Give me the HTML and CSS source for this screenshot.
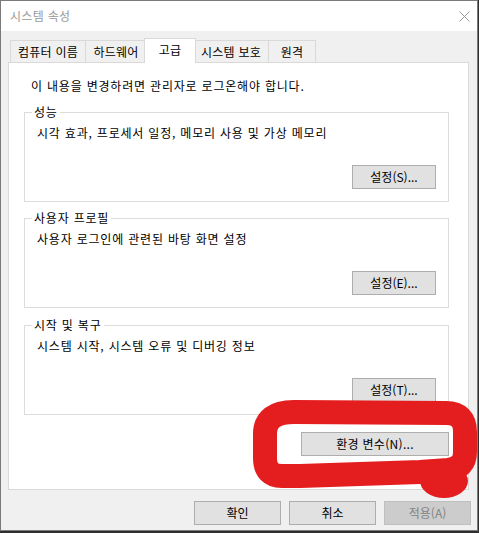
FILE: index.html
```html
<!DOCTYPE html>
<html lang="ko">
<head>
<meta charset="utf-8">
<title>시스템 속성</title>
<link rel="stylesheet" href="styles.css">
</head>
<body>
<div class="window">
  <div class="titlebar">
    <span class="title">시스템 속성</span>
    <span class="close">
      <svg width="11" height="11" viewBox="0 0 11 11"><path d="M0.5 0.5 L10.5 10.5 M10.5 0.5 L0.5 10.5" stroke="#9a9a9a" stroke-width="1" fill="none"/></svg>
    </span>
  </div>
  <div class="body">
    <div class="tabs">
      <div class="tab t-name">컴퓨터 이름</div>
      <div class="tab t-hw">하드웨어</div>
      <div class="tab active">고급</div>
      <div class="tab t-prot">시스템 보호</div>
      <div class="tab t-remote">원격</div>
    </div>
    <div class="panel">
      <p class="note">이 내용을 변경하려면 관리자로 로그온해야 합니다.</p>
      <div class="group">
        <span class="legend">성능</span>
        <p class="desc">시각 효과, 프로세서 일정, 메모리 사용 및 가상 메모리</p>
        <button class="btn">설정(S)...</button>
      </div>
      <div class="group">
        <span class="legend">사용자 프로필</span>
        <p class="desc">사용자 로그인에 관련된 바탕 화면 설정</p>
        <button class="btn">설정(E)...</button>
      </div>
      <div class="group">
        <span class="legend">시작 및 복구</span>
        <p class="desc">시스템 시작, 시스템 오류 및 디버깅 정보</p>
        <button class="btn">설정(T)...</button>
      </div>
      <div class="env-row">
        <button class="btn env">환경 변수(N)...</button>
      </div>
    </div>
    <div class="actions">
      <button class="btn wide">확인</button>
      <button class="btn wide">취소</button>
      <button class="btn wide disabled">적용(A)</button>
    </div>
  </div>
  <svg class="marker" width="478" height="531" viewBox="0 0 478 531">
    <path d="M300 476 L282 476 Q265 476 265 458 L265 434 Q265 412 294 412 L446 413 Q465 413 465 432 L465 452 Q465 468 448 470 L420 472 L300 476"
          fill="none" stroke="#e41e1f" stroke-width="24" stroke-linecap="round" stroke-linejoin="round"/>
    <ellipse cx="444" cy="481" rx="24" ry="17" fill="#e41e1f"/>
  </svg>
</div>
</body>
</html>
```
FILE: styles.css
```css
* { box-sizing: border-box; }

body {
  margin: 0;
  background: #2f2f2f;
  font-family: "Noto Sans CJK KR", "Malgun Gothic", sans-serif;
  font-size: 12px;
  color: #000;
}

.window {
  position: relative;
  width: 478px;
  height: 531px;
  border: 1px solid #7a7a7a;
  background: #f0f0f0;
  display: flex;
  flex-direction: column;
}

.titlebar {
  height: 30px;
  background: #fff;
  display: flex;
  align-items: center;
  padding-left: 9px;
}

.title {
  color: #9a9a9a;
  line-height: 16px;
  letter-spacing: 0.3px;
}

.close {
  margin-left: auto;
  width: 26px;
  display: flex;
  justify-content: center;
  align-items: center;
}

.close svg { display: block; }

.body {
  padding: 7px 0 0 7px;
  display: flex;
  flex-direction: column;
}

.tabs {
  display: flex;
  align-items: flex-end;
  height: 24px;
  padding-left: 2px;
}

.tab {
  height: 22px;
  border: 1px solid #d9d9d9;
  border-bottom: none;
  background: #f0f0f0;
  display: flex;
  align-items: center;
  justify-content: center;
  line-height: 16px;
  white-space: nowrap;
  letter-spacing: 0.2px;
}

.t-name { width: 76px; }
.t-hw { width: 62px; margin-left: -1px; }
.tab.active {
  width: 52px;
  height: 25px;
  margin-left: -3px;
  margin-bottom: -1px;
  background: #fff;
  position: relative;
  z-index: 1;
  padding-bottom: 2px;
}
.t-prot { width: 76px; margin-left: -3px; }
.t-remote { width: 48px; margin-left: -1px; }

.panel {
  width: 461px;
  height: 428px;
  border: 1px solid #d9d9d9;
  background: #fff;
  padding: 15px 19px 0 15px;
  display: flex;
  flex-direction: column;
}

.note {
  margin: 0 0 18px 7px;
  line-height: 16px;
  letter-spacing: 0.8px;
}

.group {
  height: 90px;
  border: 1px solid #dcdcdc;
  margin-bottom: 16px;
  padding: 0 12px 12px 12px;
  display: flex;
  flex-direction: column;
}

.group + .group + .group { margin-top: 1px; }

.legend {
  align-self: flex-start;
  margin: -9px 0 0 -5px;
  padding: 0 2px;
  background: #fff;
  line-height: 16px;
  letter-spacing: 0.8px;
}

.desc {
  margin: 5px 0 0 0;
  line-height: 16px;
  letter-spacing: 0.8px;
}

.btn {
  font-family: inherit;
  font-size: 12px;
  line-height: 16px;
  color: #000;
  background: #e1e1e1;
  border: 1px solid #adadad;
  padding: 0;
  height: 24px;
  width: 84px;
  border-radius: 0;
}

.group .btn {
  margin-top: auto;
  align-self: flex-end;
}

.env-row {
  display: flex;
  justify-content: flex-end;
  margin-top: 1px;
}

.btn.env { width: 148px; letter-spacing: 0.3px; }

.actions {
  display: flex;
  justify-content: flex-end;
  gap: 8px;
  margin-top: 11px;
  padding-right: 6px;
}

.btn.wide { width: 87px; }

.btn.disabled {
  background: #cccccc;
  border-color: #bfbfbf;
  color: #838383;
}

.marker {
  position: absolute;
  left: -1px;
  top: -1px;
  pointer-events: none;
}
```
